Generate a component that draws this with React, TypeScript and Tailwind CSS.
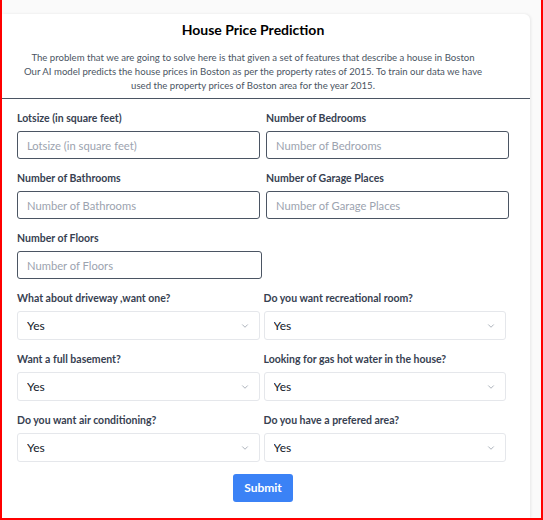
import { ChevronDown } from "lucide-react";

const inputs = [
	["Lotsize (in square feet)", "Number of Bedrooms"],
	["Number of Bathrooms", "Number of Garage Places"],
];

const selects = [
	["What about driveway ,want one?", "Do you want recreational room?"],
	["Want a full basement?", "Looking for gas hot water in the house?"],
	["Do you want air conditioning?", "Do you have a prefered area?"],
];

const Label = ({ text }: { text: string }) => (
	<label className="block text-[10.5px] leading-[14px] font-bold text-[#374151] mb-[6px]">
		{text}
	</label>
);

const TextField = ({ name }: { name: string }) => (
	<div>
		<Label text={name} />
		<input
			placeholder={name}
			className="w-full h-[28px] px-[9px] text-[11.2px] rounded-[3px] border border-[#4b5563] outline-none placeholder:text-[#9ca3af]"
		/>
	</div>
);

const SelectField = ({ name }: { name: string }) => (
	<div>
		<Label text={name} />
		<div className="relative">
			<select className="w-full h-[29px] pl-[9px] text-[12px] text-[#111827] bg-white rounded-[3px] border border-[#e5e7eb] appearance-none outline-none">
				<option>Yes</option>
				<option>No</option>
			</select>
			<ChevronDown
				className="absolute right-[10px] top-[10px] w-[10px] h-[10px] text-[#9ca3af] pointer-events-none"
				strokeWidth={2}
			/>
		</div>
	</div>
);

export default function App() {
	return (
		<div
			className="w-[543px] h-[520px] bg-[#fafafa] border-x-2 border-b-2 border-[#ff0000] overflow-hidden"
			style={{ fontFamily: 'Lato, "Noto Sans", sans-serif' }}
		>
			<div className="mt-[14px] w-[528px] h-[504px] bg-white rounded-tr-md shadow-[1px_0_3px_rgba(0,0,0,0.08)]">
				<div className="pt-[6px] pr-[26px] text-center">
					<h1 className="text-[14px] leading-[20px] font-bold text-black">
						House Price Prediction
					</h1>
					<p className="mt-[11px] text-[9.6px] leading-[14px] text-[#4b5563]">
						The problem that we are going to solve here is that given a set of
						features that describe a house in Boston
						<br />
						Our AI model predicts the house prices in Boston as per the property
						rates of 2015. To train our data we have
						<br />
						used the property prices of Boston area for the year 2015.
					</p>
				</div>
				<div className="mt-[5px] h-px bg-[#4b5563]" />
				<form className="pl-[15px] pr-[21px] pt-[12px] flex flex-col gap-[12px]">
					{inputs.map((row) => (
						<div key={row[0]} className="grid grid-cols-2 gap-x-[6px]">
							{row.map((n) => (
								<TextField key={n} name={n} />
							))}
						</div>
					))}
					<div className="w-[245px]">
						<TextField name="Number of Floors" />
					</div>
					{selects.map((row) => (
						<div key={row[0]} className="grid grid-cols-2 gap-x-[4px] pr-[3px]">
							{row.map((n) => (
								<SelectField key={n} name={n} />
							))}
						</div>
					))}
					<div className="flex justify-center">
						<button
							type="button"
							className="h-[28px] px-[11px] rounded-[3px] bg-[#3b82f6] text-white text-[12px] font-bold"
						>
							Submit
						</button>
					</div>
				</form>
			</div>
		</div>
	);
}
